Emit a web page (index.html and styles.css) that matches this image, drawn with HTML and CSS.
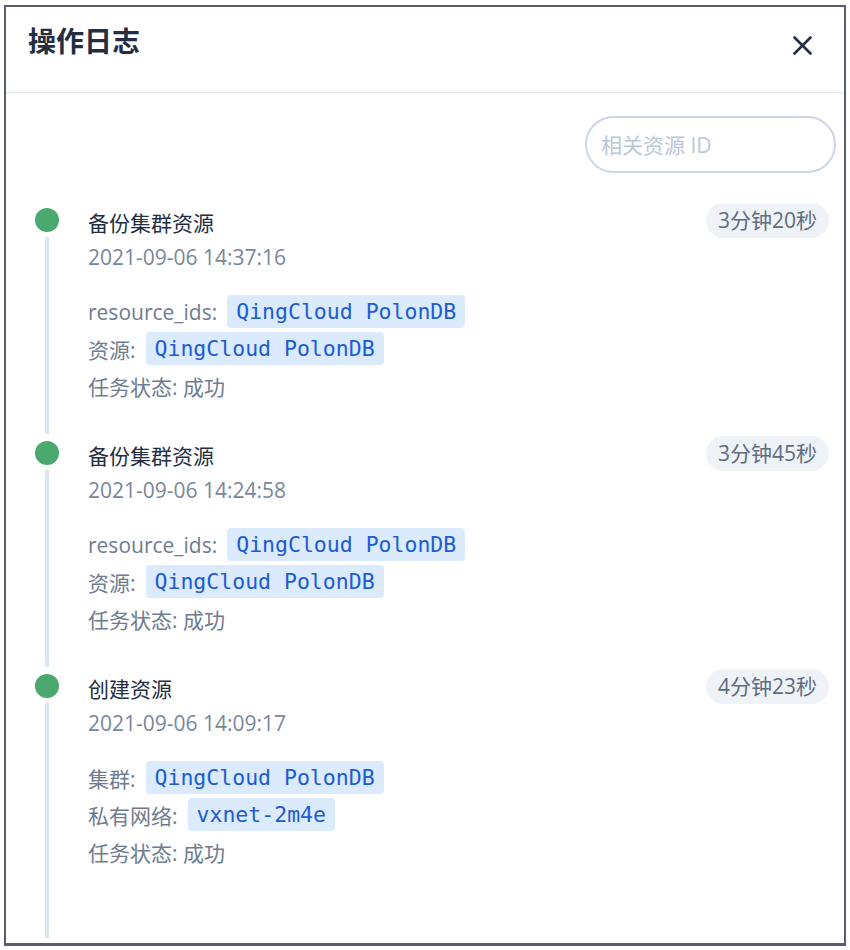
FILE: index.html
```html
<!DOCTYPE html>
<html lang="zh-CN">
<head>
<meta charset="utf-8">
<title>操作日志</title>
<link rel="stylesheet" href="styles.css">
</head>
<body>
<div class="dialog">
  <div class="header">
    <h1 class="title">操作日志</h1>
    <svg class="close" width="19" height="19" viewBox="0 0 19 19" aria-label="关闭">
      <path d="M1.5 1.5 L17.5 17.5 M17.5 1.5 L1.5 17.5" stroke="#242e42" stroke-width="2.6" stroke-linecap="round" fill="none"/>
    </svg>
  </div>
  <div class="body">
    <div class="search-row">
      <input class="search" type="text" placeholder="相关资源 ID">
    </div>
    <div class="timeline">
      <div class="item">
        <div class="rail"><span class="dot"></span><span class="line"></span></div>
        <div class="content">
          <div class="name">备份集群资源</div>
          <div class="time">2021-09-06 14:37:16</div>
          <div class="props">
            <div class="prop"><span class="label">resource_ids:</span><span class="tag">QingCloud PolonDB</span></div>
            <div class="prop"><span class="label">资源:</span><span class="tag">QingCloud PolonDB</span></div>
            <div class="prop"><span class="label">任务状态: 成功</span></div>
          </div>
        </div>
        <div class="badge">3分钟20秒</div>
      </div>
      <div class="item">
        <div class="rail"><span class="dot"></span><span class="line"></span></div>
        <div class="content">
          <div class="name">备份集群资源</div>
          <div class="time">2021-09-06 14:24:58</div>
          <div class="props">
            <div class="prop"><span class="label">resource_ids:</span><span class="tag">QingCloud PolonDB</span></div>
            <div class="prop"><span class="label">资源:</span><span class="tag">QingCloud PolonDB</span></div>
            <div class="prop"><span class="label">任务状态: 成功</span></div>
          </div>
        </div>
        <div class="badge">3分钟45秒</div>
      </div>
      <div class="item last">
        <div class="rail"><span class="dot"></span><span class="line"></span></div>
        <div class="content">
          <div class="name">创建资源</div>
          <div class="time">2021-09-06 14:09:17</div>
          <div class="props">
            <div class="prop"><span class="label">集群:</span><span class="tag">QingCloud PolonDB</span></div>
            <div class="prop"><span class="label">私有网络:</span><span class="tag">vxnet-2m4e</span></div>
            <div class="prop"><span class="label">任务状态: 成功</span></div>
          </div>
        </div>
        <div class="badge">4分钟23秒</div>
      </div>
    </div>
  </div>
</div>
</body>
</html>
```

FILE: styles.css
```css
html, body {
  margin: 0;
  padding: 0;
  background: #ffffff;
}

body {
  font-family: "Open Sans", "Noto Sans CJK SC", sans-serif;
  color: #242e42;
}

.dialog {
  box-sizing: border-box;
  margin: 5px 4px 0 4px;
  width: 842px;
  height: 941px;
  border: 2px solid #585d69;
  border-bottom-width: 3px;
  display: flex;
  flex-direction: column;
  background: #fff;
}

.header {
  box-sizing: border-box;
  height: 86px;
  flex: none;
  display: flex;
  align-items: flex-start;
  justify-content: space-between;
  padding: 13px 32px 0 22px;
  border-bottom: 1px solid #dfe6ee;
}

.title {
  margin: 0;
  font-size: 28px;
  line-height: 40px;
  font-weight: 600;
  color: #242e42;
  font-family: "Noto Sans CJK SC", sans-serif;
}

.close {
  margin-top: 16px;
  display: block;
}

.body {
  flex: 1;
  display: flex;
  flex-direction: column;
  padding: 23px 15px 0 29px;
}

.search-row {
  display: flex;
  justify-content: flex-end;
  margin-right: -7px;
}

.search {
  box-sizing: border-box;
  width: 251px;
  height: 57px;
  border: 2px solid #cbd7e4;
  border-radius: 29px;
  padding: 0 14px;
  font-family: "Open Sans", "Noto Sans CJK SC", sans-serif;
  font-size: 21px;
  color: #242e42;
  outline: none;
  background: #fff;
}

.search::placeholder {
  color: #b9c7d8;
}

.timeline {
  flex: 1;
  display: flex;
  flex-direction: column;
  margin-top: 33px;
}

.item {
  display: flex;
  align-items: flex-start;
  height: 233px;
}

.item.last {
  flex: 1;
  height: auto;
}

.rail {
  width: 24px;
  align-self: stretch;
  display: flex;
  flex-direction: column;
  align-items: center;
  padding-top: 2px;
  flex: none;
}

.dot {
  width: 24px;
  height: 24px;
  border-radius: 50%;
  background: #4ba86e;
  flex: none;
}

.line {
  flex: 1;
  width: 4px;
  margin: 5px 0 5px 0;
  background: #dce6f0;
}

.content {
  flex: 1;
  margin-left: 29px;
}

.name {
  font-size: 21px;
  line-height: 34px;
  color: #242e42;
}

.time {
  font-size: 21px;
  line-height: 34px;
  color: #79879c;
}

.props {
  margin-top: 19px;
}

.prop {
  display: flex;
  align-items: center;
  height: 37px;
}

.label {
  font-size: 21px;
  color: #6f7c90;
}

.tag {
  margin-left: 10px;
  height: 33px;
  line-height: 33px;
  padding: 0 9px;
  border-radius: 4px;
  background: #dbeafc;
  color: #1c5cd4;
  font-family: "DejaVu Sans Mono", monospace;
  font-size: 21.5px;
}

.badge {
  margin-top: -3px;
  height: 35px;
  line-height: 35px;
  padding: 0 12px;
  border-radius: 18px;
  background: #eff3f8;
  color: #5f6c81;
  font-size: 21px;
  flex: none;
}
```
